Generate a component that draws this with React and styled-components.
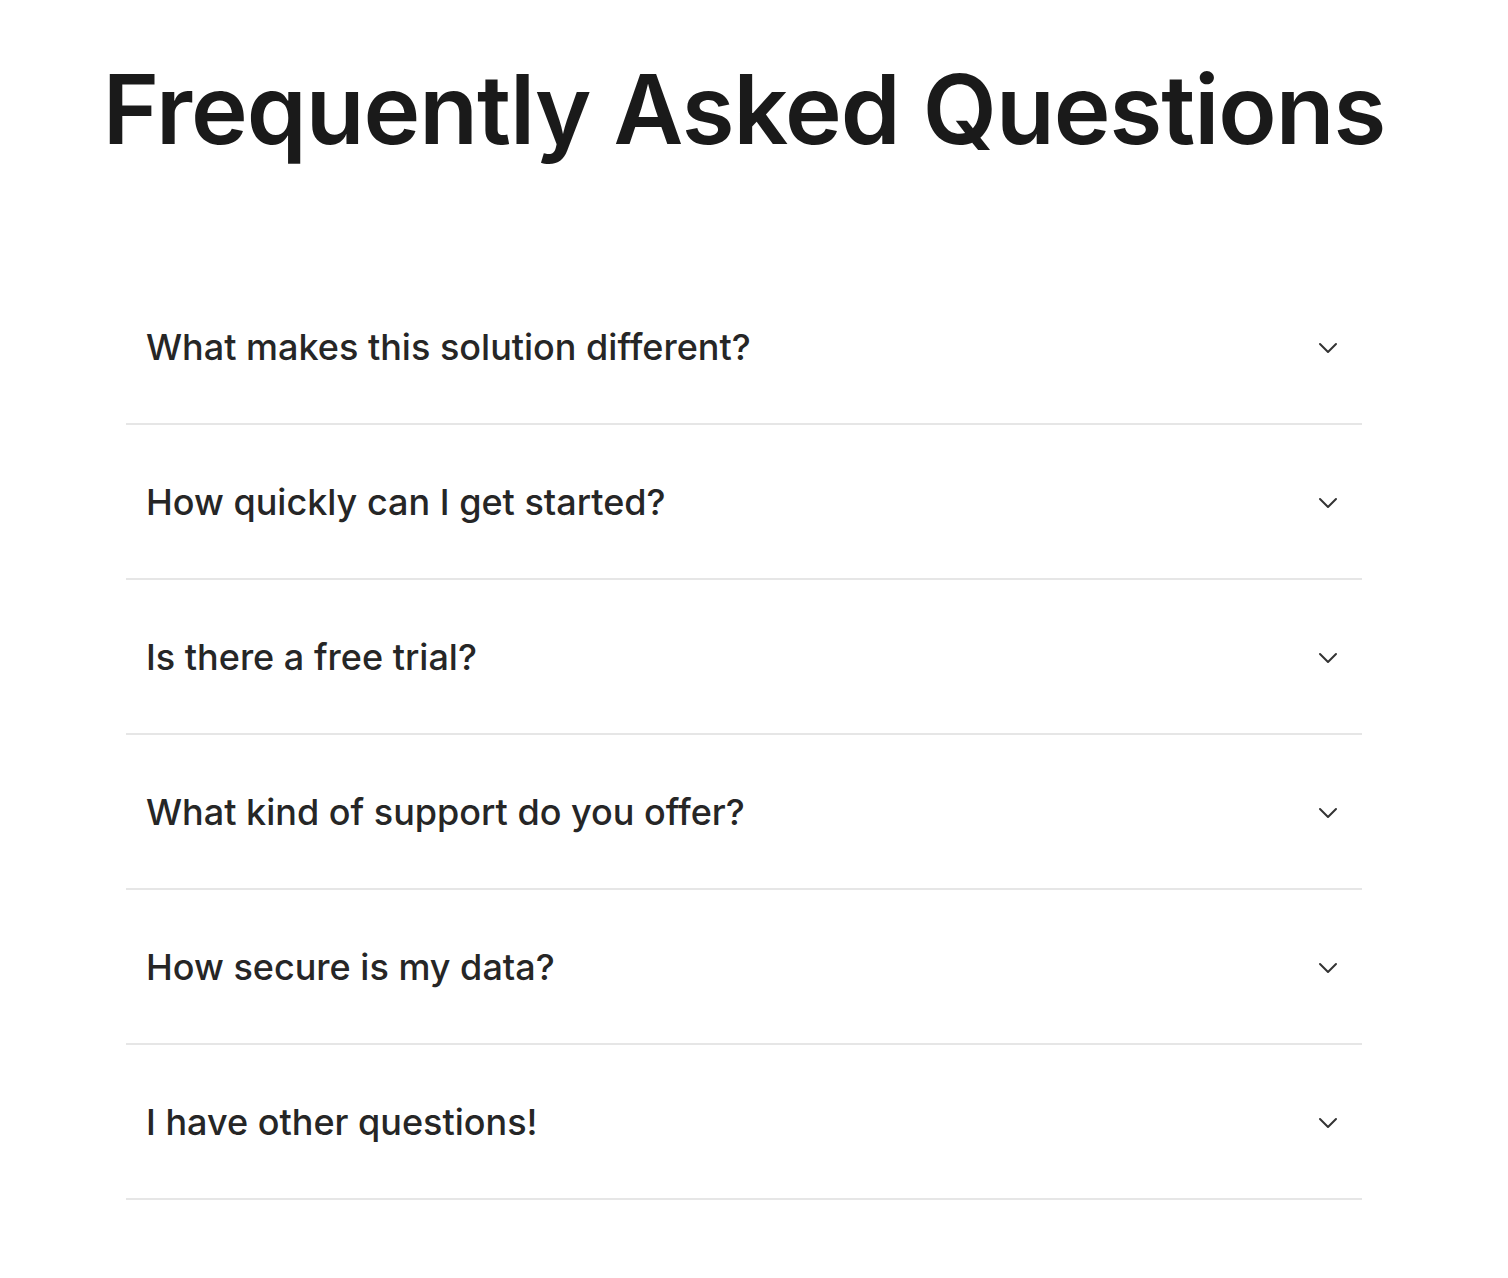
import React from "react";
import styled, { createGlobalStyle } from "styled-components";
import { ChevronDown } from "lucide-react";

const GlobalStyle = createGlobalStyle`
  body {
    margin: 0;
    background: #ffffff;
    font-family: Inter, "Noto Sans", "Liberation Sans", sans-serif;
    color: #1a1a1a;
    -webkit-font-smoothing: antialiased;
  }
`;

const Page = styled.main`
  padding: 51px 20px 60px 0;
`;

const Title = styled.h1`
  margin: 0;
  display: flex;
  justify-content: center;
  white-space: nowrap;
  font-size: 96px;
  font-weight: 600;
  line-height: normal;
  letter-spacing: -1px;
  color: #1a1a1a;
`;

const List = styled.div`
  margin: 103px 126px 0 126px;
  display: flex;
  flex-direction: column;
`;

const Row = styled.button`
  display: flex;
  align-items: center;
  justify-content: space-between;
  width: 100%;
  padding: 50px 18px 49px 20px;
  background: none;
  border: none;
  border-bottom: 2px solid #e6e6e6;
  font-family: inherit;
  font-size: 36px;
  line-height: 1.5;
  font-weight: 500;
  color: #262626;
  text-align: left;
  cursor: pointer;
`;

const Icon = styled(ChevronDown)`
  flex-shrink: 0;
  color: #333333;
  margin-top: 2px;
`;

const questions = [
  "What makes this solution different?",
  "How quickly can I get started?",
  "Is there a free trial?",
  "What kind of support do you offer?",
  "How secure is my data?",
  "I have other questions!",
];

export default function App() {
  return (
    <>
      <GlobalStyle />
      <Page>
        <Title>Frequently Asked Questions</Title>
        <List>
          {questions.map((q) => (
            <Row key={q}>
              <span>{q}</span>
              <Icon size={32} strokeWidth={1.5} />
            </Row>
          ))}
        </List>
      </Page>
    </>
  );
}
